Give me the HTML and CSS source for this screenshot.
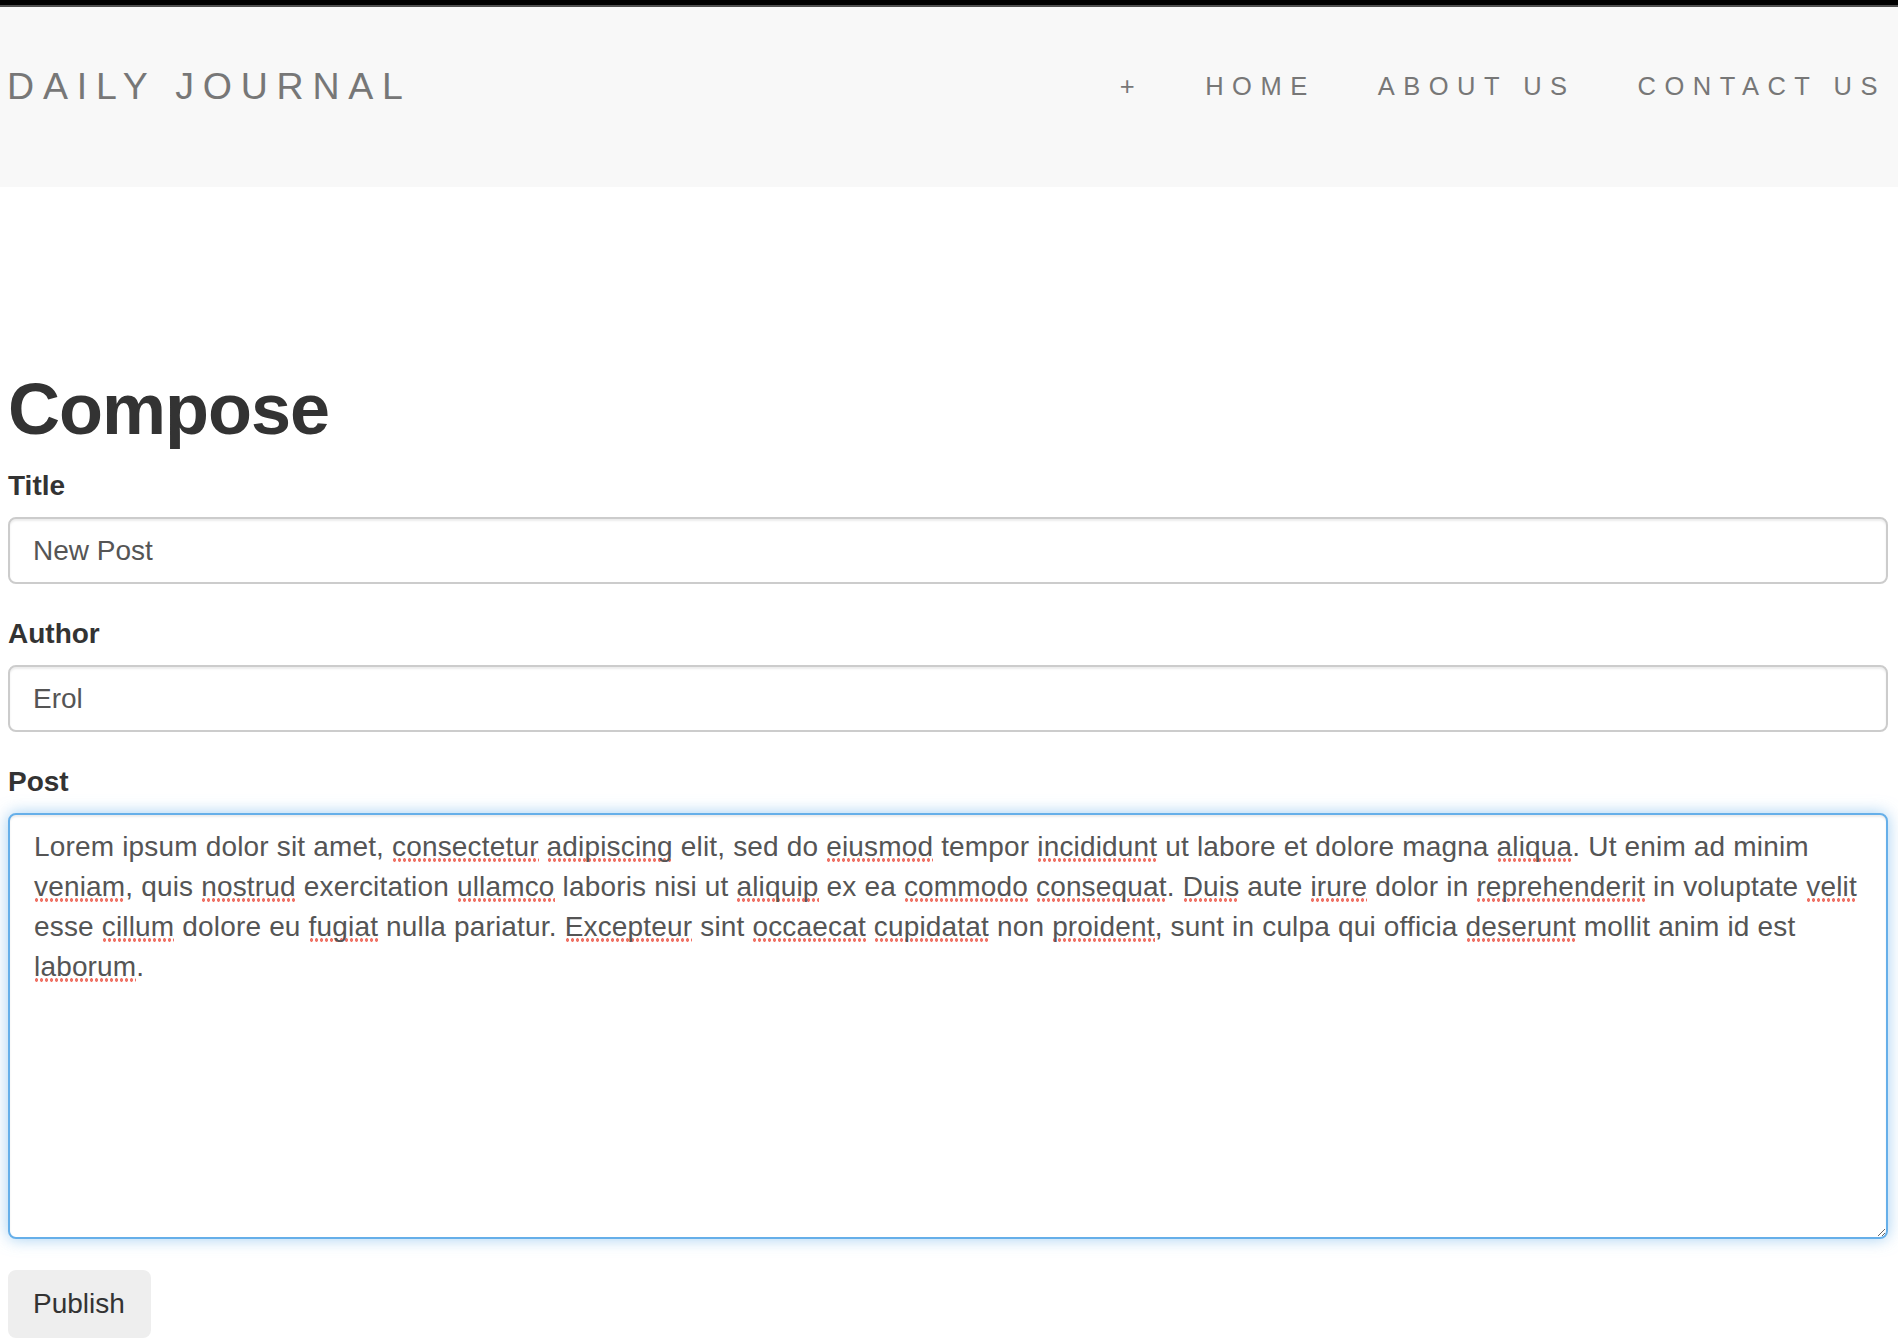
FILE: index.html
```html
<!DOCTYPE html>
<html lang="en">
<head>
<meta charset="utf-8">
<title>Daily Journal</title>
<link rel="stylesheet" href="styles.css">
</head>
<body>
<div class="topbar"></div>
<header class="navbar">
  <div class="navbar-inner">
    <a class="brand" href="#">DAILY JOURNAL</a>
    <ul class="nav">
      <li><a href="#">+</a></li>
      <li><a href="#">HOME</a></li>
      <li><a href="#">ABOUT US</a></li>
      <li><a href="#">CONTACT US</a></li>
    </ul>
  </div>
</header>
<main class="container">
  <h1 class="page-title">Compose</h1>
  <form class="compose-form">
    <div class="form-group">
      <label class="form-label">Title</label>
      <input class="form-control" type="text" value="New Post">
    </div>
    <div class="form-group">
      <label class="form-label">Author</label>
      <input class="form-control" type="text" value="Erol">
    </div>
    <div class="form-group">
      <label class="form-label">Post</label>
      <div class="form-control textarea is-focused" role="textbox" aria-multiline="true">Lorem ipsum dolor sit amet, <span class="sp">consectetur</span> <span class="sp">adipiscing</span> elit, sed do <span class="sp">eiusmod</span> tempor <span class="sp">incididunt</span> ut labore et dolore magna <span class="sp">aliqua</span>. Ut enim ad minim <span class="sp">veniam</span>, quis <span class="sp">nostrud</span> exercitation <span class="sp">ullamco</span> laboris nisi ut <span class="sp">aliquip</span> ex ea <span class="sp">commodo</span> <span class="sp">consequat</span>. <span class="sp">Duis</span> aute <span class="sp">irure</span> dolor in <span class="sp">reprehenderit</span> in voluptate <span class="sp">velit</span> esse <span class="sp">cillum</span> dolore eu <span class="sp">fugiat</span> nulla pariatur. <span class="sp">Excepteur</span> sint <span class="sp">occaecat</span> <span class="sp">cupidatat</span> non <span class="sp">proident</span>, sunt in culpa qui officia <span class="sp">deserunt</span> mollit anim id est <span class="sp">laborum</span>.</div>
    </div>
    <button class="btn" type="button">Publish</button>
  </form>
</main>
</body>
</html>
```

FILE: styles.css
```css
* {
  box-sizing: border-box;
}

html, body {
  margin: 0;
  padding: 0;
  background: #ffffff;
}

body {
  font-family: "Liberation Sans", Arial, Helvetica, sans-serif;
  color: #333333;
}

.topbar {
  height: 7px;
  background: #000000;
  border-bottom: 2px solid #4f4f4f;
}

.navbar {
  background: #f8f8f8;
  padding-bottom: 20px;
}

.navbar-inner {
  height: 160px;
  display: flex;
  align-items: center;
  justify-content: space-between;
  padding: 0 12px 0 7px;
}

.brand {
  font-size: 37.5px;
  letter-spacing: 8.8px;
  color: #777777;
  text-decoration: none;
  line-height: 1;
}

.nav {
  display: flex;
  align-items: center;
  list-style: none;
  margin: 0;
  padding: 0;
}

.nav a {
  display: block;
  font-size: 25.5px;
  letter-spacing: 8.5px;
  line-height: 1;
  color: #777777;
  text-decoration: none;
  padding: 0 31px;
}

.nav li:last-child a {
  padding-right: 0;
}

.container {
  padding: 183px 10px 40px 8px;
}

.page-title {
  font-size: 72px;
  line-height: 79px;
  font-weight: 700;
  letter-spacing: -1px;
  margin: 0 0 17px;
  color: #333333;
}

.form-group {
  margin-bottom: 30px;
}

.form-label {
  display: block;
  font-size: 28px;
  line-height: 40px;
  font-weight: 700;
  color: #333333;
  margin-bottom: 11px;
}

.form-control {
  display: block;
  width: 100%;
  height: 67px;
  padding: 0 23px;
  font-family: inherit;
  font-size: 28px;
  color: #555555;
  background: #ffffff;
  border: 2px solid #cccccc;
  border-radius: 8px;
  box-shadow: inset 0 2px 2px rgba(0, 0, 0, 0.075);
  outline: none;
}

.textarea {
  height: 426px;
  padding: 12px 14px 12px 24px;
  line-height: 40px;
  letter-spacing: 0.17px;
  overflow: auto;
  resize: vertical;
  white-space: normal;
}

.is-focused {
  border-color: #66afe9;
  box-shadow: inset 0 2px 2px rgba(0, 0, 0, 0.075), 0 0 16px rgba(102, 175, 233, 0.6);
}

.sp {
  background-image: radial-gradient(circle at 2.5px 2px, #f07366 1.5px, rgba(240, 115, 102, 0) 2px);
  background-size: 5px 4px;
  background-repeat: repeat-x;
  background-position: 0 100%;
}

.btn {
  display: inline-block;
  margin-top: 1px;
  height: 68px;
  padding: 0 24px 0 23px;
  font-family: inherit;
  font-size: 28px;
  color: #333333;
  background: #eeeeee;
  border: 2px solid #eeeeee;
  border-radius: 8px;
  cursor: pointer;
}
```
